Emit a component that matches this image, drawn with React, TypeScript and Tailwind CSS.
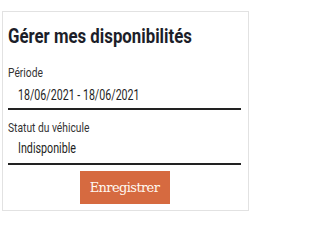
const sans = { fontFamily: "Roboto, 'Liberation Sans', sans-serif" };

export default function App() {
  return (
    <div className="h-[218px] w-[252px] bg-white pt-[11px] pl-[2px]">
      <div
        className="h-[200px] w-[247px] border border-[#e2e2e2] bg-white px-[5px] pt-[12px] text-[#1f1f24]"
        style={sans}
      >
        <h1 className="whitespace-nowrap text-[21px] font-bold leading-[24px] text-[#1c1e29]">
          <span className="inline-block origin-left scale-x-[0.8]">Gérer mes disponibilités</span>
        </h1>

        <div className="mt-[16px] whitespace-nowrap text-[13.5px] leading-[16px] text-[#333]">
          <span className="inline-block origin-left scale-x-[0.76]">Période</span>
        </div>
        <div className="ml-[10px] mt-[6px] whitespace-nowrap text-[15px] leading-[18px]">
          <span className="inline-block origin-left scale-x-[0.71]">18/06/2021 - 18/06/2021</span>
        </div>
        <div className="mr-[2px] mt-[4px] h-[1.5px] bg-[#222]" />

        <div className="mt-[9px] whitespace-nowrap text-[13.5px] leading-[16px] text-[#333]">
          <span className="inline-block origin-left scale-x-[0.76]">Statut du véhicule</span>
        </div>
        <div className="ml-[10px] mt-[5.5px] whitespace-nowrap text-[14.5px] leading-[18px]">
          <span className="inline-block origin-left scale-x-[0.74]">Indisponible</span>
        </div>
        <div className="mr-[2px] mt-[5px] h-[1.5px] bg-[#222]" />

        <div className="mt-[6.5px] flex justify-center pr-[2px]">
          <button
            className="h-[33px] w-[90px] bg-[#d66a40] text-[13px] tracking-[-0.6px] text-[#fff8f0]"
            style={{ fontFamily: "'DejaVu Serif', 'Liberation Serif', serif" }}
          >
            Enregistrer
          </button>
        </div>
      </div>
    </div>
  );
}
